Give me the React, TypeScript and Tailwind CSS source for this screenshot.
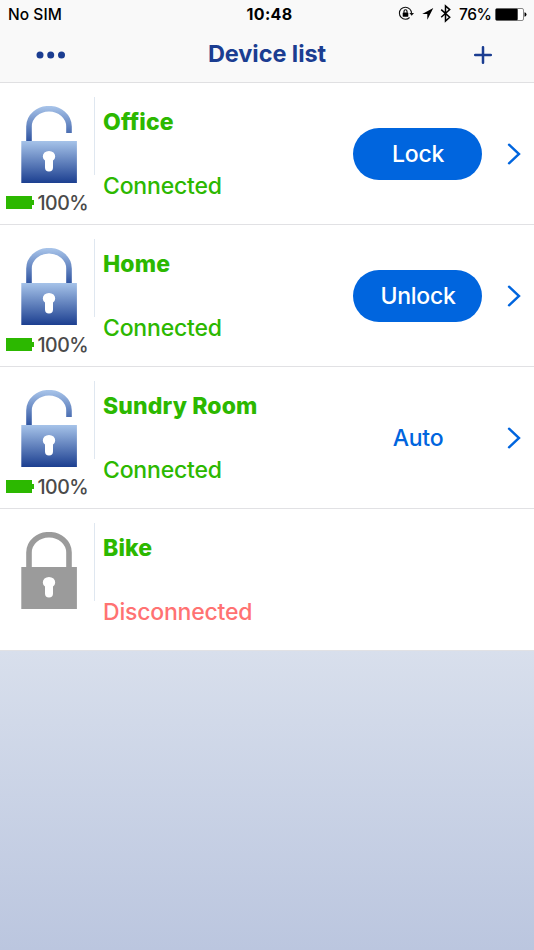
import { useId } from "react";

type Device = {
  name: string;
  connected: boolean;
  open: boolean;
  action?: "Lock" | "Unlock" | "Auto";
};

const devices: Device[] = [
  { name: "Office", connected: true, open: true, action: "Lock" },
  { name: "Home", connected: true, open: false, action: "Unlock" },
  { name: "Sundry Room", connected: true, open: true, action: "Auto" },
  { name: "Bike", connected: false, open: false },
];

function Padlock({ open, active }: { open: boolean; active: boolean }) {
  const id = useId();
  const shackle = `${id}-shackle`;
  const body = `${id}-body`;
  return (
    <svg width="56" height="77" viewBox="0 0 56 77" className="block">
      <defs>
        <linearGradient id={shackle} gradientUnits="userSpaceOnUse" x1="0" y1="0" x2="0" y2="36">
          <stop offset="0" stopColor="#a9c5ea" />
          <stop offset="1" stopColor="#2c519f" />
        </linearGradient>
        <linearGradient id={body} x1="0" y1="0" x2="0" y2="1">
          <stop offset="0" stopColor="#a6c3e9" />
          <stop offset="1" stopColor="#1c3f90" />
        </linearGradient>
      </defs>
      <path
        d={open ? "M8 36V20.500A20 17.800 0 0 1 48 20.500V27" : "M8 36V20.500A20 17.800 0 0 1 48 20.500V36"}
        fill="none"
        stroke={active ? `url(#${shackle})` : "#9b9b9b"}
        strokeWidth="5.600"
      />
      <rect x="0.300" y="35" width="55.600" height="42" fill={active ? `url(#${body})` : "#9b9b9b"} />
      <path d="M24 54.600A6.200 5.500 0 1 1 32 54.600V61.500A4 4 0 0 1 24 61.500Z" fill="#fff" />
    </svg>
  );
}

function StatusBar() {
  return (
    <div className="grid h-7 grid-cols-3 items-center text-[15.500px] font-medium text-black">
      <span className="pl-2 pt-px tracking-[0.050px]">No SIM</span>
      <span className="pl-[5px] text-center text-base font-bold tracking-[0.300px]">10:48</span>
      <div className="flex items-center justify-end pr-[7px]">
        <svg width="56" height="20" viewBox="0 0 56 20" className="block shrink-0">
          <path d="M11.600 4.900A6 6 0 1 0 11.600 13.500" fill="none" stroke="#111" strokeWidth="1.100" />
          <path d="M11.600 4.900A6 6 0 0 1 13.500 9.200" fill="none" stroke="#111" strokeWidth="1.100" />
          <path d="M11.400 9H16L13.700 11.800Z" fill="#111" />
          <rect x="4.700" y="8.500" width="5.600" height="4.200" rx=".4" fill="#000" />
          <path d="M6 8.800V7.300a1.500 1.500 0 0 1 3 0v1.500" fill="none" stroke="#000" strokeWidth="1.100" />
          <path d="M35.300 4L24.200 9.900H29.300V15.700Z" fill="#000" />
          <path d="M43.200 5.600L51.700 13.300L47.500 17V2L51.700 5.600L43.200 13.300" fill="none" stroke="#000" strokeWidth="1.500" />
        </svg>
        <span className="ml-[5px] w-[34px] shrink-0 whitespace-nowrap pt-px tracking-[-0.400px]">76%</span>
        <svg width="32" height="13" viewBox="0 0 32 13" className="ml-[2px] block shrink-0">
          <rect x=".5" y=".5" width="28" height="12" rx="1.500" fill="#fff" stroke="#888" />
          <rect x=".7" y=".7" width="22" height="11.600" rx="1" fill="#000" />
          <path d="M29.500 4.300q2 .3 2 2.200t-2 2.200Z" fill="#000" />
        </svg>
      </div>
    </div>
  );
}

function NavBar() {
  return (
    <div className="grid h-[54px] grid-cols-3 items-center text-[#1b3d91]">
      <svg width="30" height="8" viewBox="0 0 30 8" className="ml-[35.500px] block">
        <circle cx="4" cy="4" r="3.500" fill="currentColor" />
        <circle cx="14.700" cy="4" r="3.500" fill="currentColor" />
        <circle cx="25.500" cy="4" r="3.500" fill="currentColor" />
      </svg>
      <h1 className="whitespace-nowrap pb-[2px] text-center text-[23.500px] font-bold tracking-[-0.060px]">Device list</h1>
      <svg width="18" height="18" viewBox="0 0 18 18" className="mr-[42px] block justify-self-end">
        <path d="M1.200 9H16.800M9 1.200V16.800" stroke="currentColor" strokeWidth="2.500" strokeLinecap="round" />
      </svg>
    </div>
  );
}

function DeviceRow({ device }: { device: Device }) {
  const { name, connected, open, action } = device;
  return (
    <li className="flex h-[142px] border-b border-[#e1e1e4] bg-white">
      <div className="w-[94px] shrink-0 pt-[23px]">
        <div className="pl-[21px]">
          <Padlock open={open} active={connected} />
        </div>
        {connected && (
          <div className="mt-[9px] flex h-[21px] items-center pl-[6px]">
            <div className="h-[13px] w-[26px] bg-[#2cb800]" />
            <div className="h-[5px] w-[1.500px] bg-[#2cb800]" />
            <span className="ml-[4px] pt-[2px] text-[19.500px] font-medium tracking-[-0.500px] text-[#4a4a4a]">100%</span>
          </div>
        )}
      </div>
      <div className="mt-[14px] h-[78px] w-px shrink-0 bg-[#dfe7f0]" />
      <div className="flex w-[258px] shrink-0 flex-col pl-2 leading-8">
        <span className="mt-[23px] whitespace-nowrap text-[23px] font-extrabold tracking-[0.120px] text-[#2cb800]">{name}</span>
        <span
          className={`mt-[32px] whitespace-nowrap text-[23px] font-medium tracking-[-0.200px] ${
            connected ? "text-[#2cb800]" : "text-[#ff7272]"
          }`}
        >
          {connected ? "Connected" : "Disconnected"}
        </span>
      </div>
      {action && (
        <div className="mt-[45px] flex h-[52px] items-center">
          <button
            className={`h-[52px] w-[129px] rounded-full pl-px text-[23px] font-medium tracking-[-0.250px] ${
              action === "Auto" ? "text-[#0065de]" : "bg-[#0065de] text-white"
            }`}
          >
            {action}
          </button>
          <svg width="14" height="22" viewBox="0 0 14 22" className="ml-[25px] block">
            <path d="M2 1.700L12 11L2 20.300" fill="none" stroke="#0065de" strokeWidth="2.400" strokeLinecap="round" />
          </svg>
        </div>
      )}
    </li>
  );
}

export default function App() {
  return (
    <main className="flex h-[950px] w-[534px] flex-col overflow-hidden bg-white font-['Inter',sans-serif]">
      <header className="h-[83px] shrink-0 border-b border-[#e0e0e2] bg-[#f9f9f9]">
        <StatusBar />
        <NavBar />
      </header>
      <ul className="shrink-0">
        {devices.map((device) => (
          <DeviceRow key={device.name} device={device} />
        ))}
      </ul>
      <div className="flex-1 bg-linear-to-b from-[#d8dfec] to-[#bbc6df]" />
    </main>
  );
}
